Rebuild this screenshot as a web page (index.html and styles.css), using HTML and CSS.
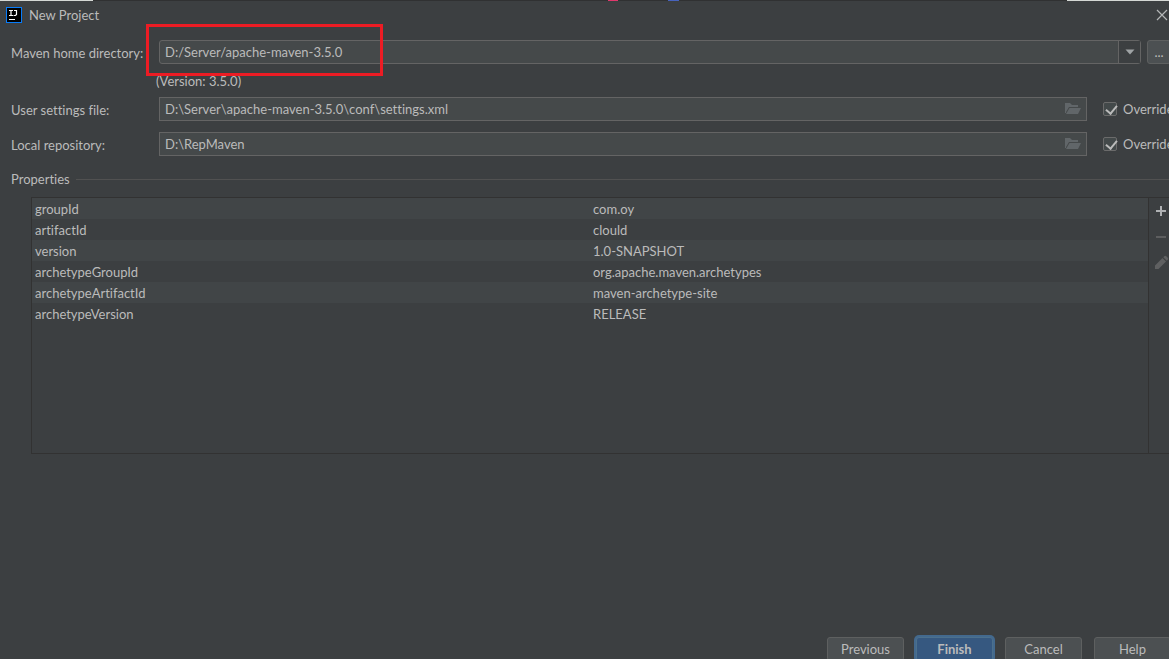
FILE: index.html
```
<!DOCTYPE html>
<html lang="en">
  <head>
    <meta charset="UTF-8" />
    <title>New Project</title>
    <link rel="stylesheet" href="styles.css">
  </head>
  <body>
    <div class="dialog">
      <div class="backdrop"></div>
      <header class="titlebar">
        <svg class="logo" width="16" height="16" viewBox="0 0 16 16">
          <rect x="0.5" y="0.5" width="15" height="15" fill="#000" stroke="#087cfa" />
          <path d="M3 3.5h4M5 3v6M3 8.5h4M8 3.5h3M10.5 3v4.5l-1 1h-2" fill="none" stroke="#fff" stroke-width="1.2" />
          <path d="M3 12.500h6" stroke="#fff" />
        </svg>
        <h1 class="title">New Project</h1>
        <button class="close" type="button" aria-label="Close">
          <svg width="12" height="12" viewBox="0 0 12 12"><path d="M1 1l10 10M11 1L1 11" stroke="#b4b6b7" stroke-width="1.2" /></svg>
        </button>
      </header>

      <form class="form">
        <div class="row row-home">
          <label class="name" for="mavenHome">Maven home directory:</label>
          <div class="combo">
            <input type="text" id="mavenHome" value="D:/Server/apache-maven-3.5.0" />
            <button class="arrow" type="button" aria-label="Show list">
              <svg width="10" height="6" viewBox="0 0 10 6"><path d="M0.5 0.5h9L5 5.5z" fill="#9fa3a5" /></svg>
            </button>
          </div>
          <button class="browse" type="button">...</button>
          <div class="highlight"></div>
        </div>
        <div class="version">(Version: 3.5.0)</div>

        <div class="row row-settings">
          <label class="name" for="settingsFile">User settings file:</label>
          <div class="field">
            <input type="text" id="settingsFile" value="D:\Server\apache-maven-3.5.0\conf\settings.xml" />
            <svg class="folder" width="16" height="12" viewBox="0 0 16 12"><path d="M0 0h5l2 2h6v2H4L1 9V10H0z" /><path d="M4.5 5H16l-3 6H1z" /></svg>
          </div>
          <label class="override"><input type="checkbox" checked /><span>Override</span></label>
        </div>

        <div class="row">
          <label class="name" for="localRepo">Local repository:</label>
          <div class="field">
            <input type="text" id="localRepo" value="D:\RepMaven" />
            <svg class="folder" width="16" height="12" viewBox="0 0 16 12"><path d="M0 0h5l2 2h6v2H4L1 9V10H0z" /><path d="M4.5 5H16l-3 6H1z" /></svg>
          </div>
          <label class="override"><input type="checkbox" checked /><span>Override</span></label>
        </div>
      </form>

      <h2 class="section-title">Properties</h2>

      <div class="properties">
        <div class="table-area">
          <table>
            <tbody>
              <tr><td>groupId</td><td>com.oy</td></tr>
              <tr><td>artifactId</td><td>clould</td></tr>
              <tr><td>version</td><td>1.0-SNAPSHOT</td></tr>
              <tr><td>archetypeGroupId</td><td>org.apache.maven.archetypes</td></tr>
              <tr><td>archetypeArtifactId</td><td>maven-archetype-site</td></tr>
              <tr><td>archetypeVersion</td><td>RELEASE</td></tr>
            </tbody>
          </table>
        </div>
        <div class="tools">
          <button type="button" aria-label="Add">
            <svg width="16" height="16" viewBox="0 0 16 16"><path d="M3 8h10M8 3v10" stroke="#afb1b3" stroke-width="2" /></svg>
          </button>
          <button type="button" aria-label="Remove" disabled>
            <svg width="16" height="16" viewBox="0 0 16 16"><path d="M3 8h10" stroke="#5d5e5f" stroke-width="2" /></svg>
          </button>
          <button type="button" aria-label="Edit" disabled>
            <svg width="16" height="16" viewBox="0 0 16 16"><path d="M2 14v-3.500l7.500-7.500 3.500 3.500L5.500 14zM10.300 2.200l1-1q1-.8 2 0l1.500 1.500q.8 1 0 2l-1 1z" fill="#5f6061" /></svg>
          </button>
        </div>
      </div>

      <footer class="actions">
        <button type="button">Previous</button>
        <button class="primary" type="button">Finish</button>
        <button type="button">Cancel</button>
        <button type="button">Help</button>
      </footer>
    </div>
  </body>
</html>
```
FILE: styles.css
```
* {
  box-sizing: border-box;
}
body {
  margin: 0;
  overflow: hidden;
  background-color: #3c3f41;
  color: #bbbbbb;
  font-family: Lato, "Open Sans", sans-serif;
  font-size: 13px;
  font-variant-ligatures: none;
  line-height: 20px;
}
button,
input {
  font: inherit;
  font-variant-ligatures: none;
  color: inherit;
}
button {
  padding: 0;
  border: none;
  background: none;
}
svg {
  display: block;
}
/* the dialog runs a little past the right and bottom window edges */
.dialog {
  display: flex;
  flex-direction: column;
  width: calc(100% + 13px);
  height: calc(100vh + 14px);
}
.backdrop {
  flex: none;
  height: 1px;
  background: linear-gradient(
    90deg,
    #d5d8d5 93px,
    #303132 93px 608px,
    #e0386c 608px 618px,
    #303132 618px 668px,
    #4763bd 668px 679px,
    #303132 679px 1067px,
    #d5d8d5 1067px
  );
}
.titlebar {
  display: flex;
  align-items: center;
  height: 28px;
  padding: 0 14px 0 6px;
}
.title {
  margin: 0 auto 0 7px;
  font-size: 13px;
  font-weight: normal;
}
.close {
  width: 12px;
}
.form {
  padding: 11px 11px 0;
}
.row {
  display: flex;
  position: relative;
  height: 24px;
}
.name {
  flex: none;
  width: 148px;
  padding-top: 3px;
}
.combo,
.field {
  display: flex;
  flex: 1;
  border: 1px solid #646464;
  background-color: #45494a;
}
.combo {
  border-radius: 3px;
}
.combo input,
.field input {
  flex: 1;
  min-width: 0;
  padding: 0 5px;
  border: none;
  outline: none;
  background: none;
}
.arrow {
  display: flex;
  align-items: center;
  justify-content: center;
  width: 22px;
  border-left: 1px solid #646464;
  background-color: #3c3f41;
}
.browse {
  width: 24px;
  margin-left: 6px;
  border: 1px solid #5e6060;
  border-radius: 3px;
  background-color: #4c5052;
}
.highlight {
  position: absolute;
  top: -16px;
  left: 135px;
  width: 237px;
  height: 52px;
  border: 3px solid #ed1c24;
}
.version {
  height: 33px;
  padding: 7px 0 0 145px;
}
.row-settings {
  margin-bottom: 11px;
}
.folder {
  align-self: center;
  margin-right: 5px;
  fill: #616669;
}
.override {
  display: flex;
  align-items: center;
  flex: none;
  width: 68px;
  margin-left: 16px;
  gap: 6px;
  white-space: nowrap;
}
.override input {
  flex: none;
  width: 14px;
  height: 14px;
  margin: 0;
  appearance: none;
  border: 1px solid #6b6b6b;
  border-radius: 2px;
  background-color: #43494a;
}
.override input:checked::before {
  content: "";
  display: block;
  width: 5px;
  height: 9px;
  margin: 0 0 0 4px;
  border: solid #bbbbbb;
  border-width: 0 2px 2px 0;
  transform: rotate(40deg);
}
.section-title {
  display: flex;
  align-items: center;
  gap: 6px;
  margin: 13px 0 8px;
  padding-left: 11px;
  font-size: 13px;
  font-weight: normal;
}
.section-title::after {
  content: "";
  flex: 1;
  height: 1px;
  background-color: #515151;
}
.properties {
  display: flex;
  min-height: 257px;
  margin: 0 11px 0 31px;
  border: 1px solid #323232;
  border-right: none;
}
.table-area {
  flex: 1;
}
table {
  width: 100%;
  border-collapse: collapse;
  table-layout: fixed;
}
td {
  height: 21px;
  padding: 0 3px;
}
tr:nth-child(odd) {
  background-color: #414547;
}
.tools {
  display: flex;
  flex-direction: column;
  gap: 10px;
  width: 23px;
  padding: 5px 0 0 4px;
  border-left: 1px solid #323232;
}
.tools button {
  width: 16px;
  height: 16px;
}
.actions {
  display: flex;
  gap: 12px;
  justify-content: flex-end;
  margin-top: auto;
  padding: 0 11px 12px;
}
.actions button {
  width: 77px;
  height: 24px;
  border: 1px solid #5e6060;
  border-radius: 3px;
  background-color: #4c5052;
}
.actions .primary {
  border-color: #4c708c;
  background-color: #365880;
  box-shadow: 0 0 0 2px #43698e;
  font-weight: bold;
}
```
